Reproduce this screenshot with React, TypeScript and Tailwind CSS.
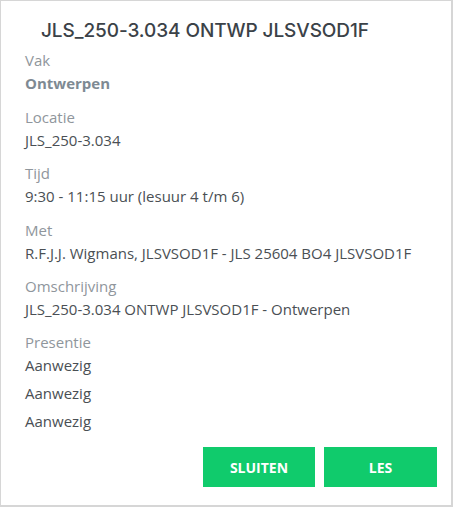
import React from "react";

const fields = [
  { label: "Vak", value: "Ontwerpen", strong: true },
  { label: "Locatie", value: "JLS_250-3.034" },
  { label: "Tijd", value: "9:30 - 11:15 uur (lesuur 4 t/m 6)" },
  { label: "Met", value: "R.F.J.J. Wigmans, JLSVSOD1F - JLS 25604 BO4 JLSVSOD1F" },
  { label: "Omschrijving", value: "JLS_250-3.034 ONTWP JLSVSOD1F - Ontwerpen" },
];

const presentie = ["Aanwezig", "Aanwezig", "Aanwezig"];

export default function App() {
  return (
    <div className="w-[453px] h-[507px] bg-[#d6d6d6] p-[1px] pr-[2px] pb-[2px]">
      <div
        className="h-full w-full bg-white flex flex-col text-[15px] text-[#4a4f54]"
        style={{ fontFamily: '"Open Sans", "Noto Sans", sans-serif' }}
      >
        {/* Header */}
        <h2
          className="pl-[40px] pt-[18px] h-[48px] text-[19px] font-medium leading-[24px] text-[#3b4248] tracking-[-0.08px]"
          style={{ fontFamily: 'Inter, "Noto Sans", sans-serif' }}
        >
          JLS_250-3.034 ONTWP JLSVSOD1F
        </h2>

        {/* Details */}
        <div className="pl-[24px] flex flex-col">
          {fields.map((f) => (
            <div key={f.label} className="flex flex-col mb-[11.6px]">
              <span className="leading-[23px] text-[#8f969c]">{f.label}</span>
              <span
                className={
                  f.strong
                    ? "leading-[22px] font-bold text-[#7e8a93]"
                    : "leading-[22px]"
                }
              >
                {f.value}
              </span>
            </div>
          ))}
          <div className="flex flex-col -mt-[1px]">
            <span className="leading-[23px] text-[#8f969c]">Presentie</span>
            {presentie.map((p, i) => (
              <span key={i} className={i === 0 ? "leading-[22px]" : "leading-[22px] mt-[6px]"}>
                {p}
              </span>
            ))}
          </div>
        </div>

        {/* Footer */}
        <div className="mt-auto mb-[18px] mr-[14px] flex justify-end gap-[9px]">
          <button className="w-[112px] h-[40px] bg-[#10cb6c] text-white font-bold text-[14px]">
            SLUITEN
          </button>
          <button className="w-[113px] h-[40px] bg-[#10cb6c] text-white font-bold text-[14px]">
            LES
          </button>
        </div>
      </div>
    </div>
  );
}
